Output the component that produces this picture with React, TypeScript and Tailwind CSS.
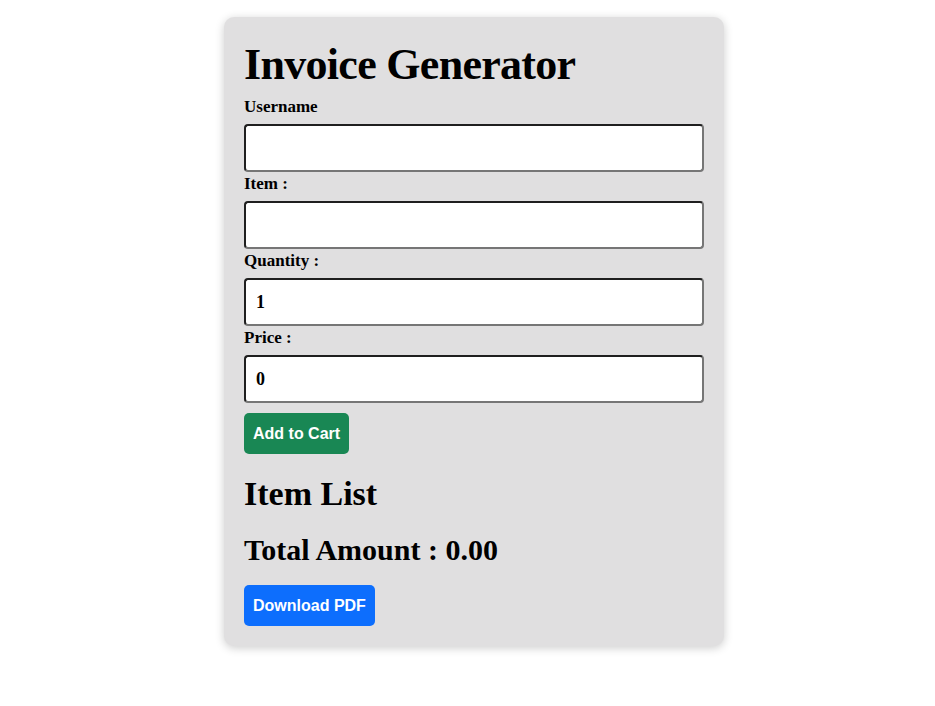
import React, { useState } from "react"

const serif = { fontFamily: '"Liberation Serif", "DejaVu Serif", serif' }

const Field = ({ label, value }: { label: string; value: string }) => (
  <div>
    <label className="block text-[17px] font-bold leading-6 mb-[5px]">{label}</label>
    <input
      defaultValue={value}
      className="w-full h-12 px-[10px] bg-white rounded border-2 border-t-[#1f1f1f] border-l-[#1f1f1f] border-r-[#767676] border-b-[#767676] text-lg font-bold outline-none"
      style={serif}
    />
  </div>
)

const App = () => {
  const [total] = useState(0)
  return (
    <div className="min-h-screen bg-white pt-[17px]" style={serif}>
      <div className="w-[500px] ml-[224px] bg-[#e0dfe0] rounded-[10px] shadow-[0_2px_10px_rgba(0,0,0,0.2)] px-5 pt-[22px] pb-5 text-black">
        <h1 className="text-[44px] font-bold leading-[52px] mb-[4px] tracking-[-0.7px]">Invoice Generator</h1>

        <div className="flex flex-col">
          <Field label="Username" value="" />
          <Field label="Item :" value="" />
          <Field label="Quantity :" value="1" />
          <Field label="Price :" value="0" />
        </div>

        <button
          className="mt-[10px] h-[41px] px-[9px] rounded-[5px] bg-[#198754] text-white font-bold text-base"
          style={{ fontFamily: '"Liberation Sans", Arial, sans-serif' }}
        >
          Add to Cart
        </button>

        <h2 className="text-[34px] font-bold leading-10 mt-5">Item List</h2>
        <h3 className="text-[30px] font-bold leading-9 mt-[18px]">Total Amount : {total.toFixed(2)}</h3>

        <button
          className="mt-[17px] h-[41px] px-[9px] rounded-[5px] bg-[#0d6efd] text-white font-bold text-base"
          style={{ fontFamily: '"Liberation Sans", Arial, sans-serif' }}
        >
          Download PDF
        </button>
      </div>
    </div>
  )
}

export default App
